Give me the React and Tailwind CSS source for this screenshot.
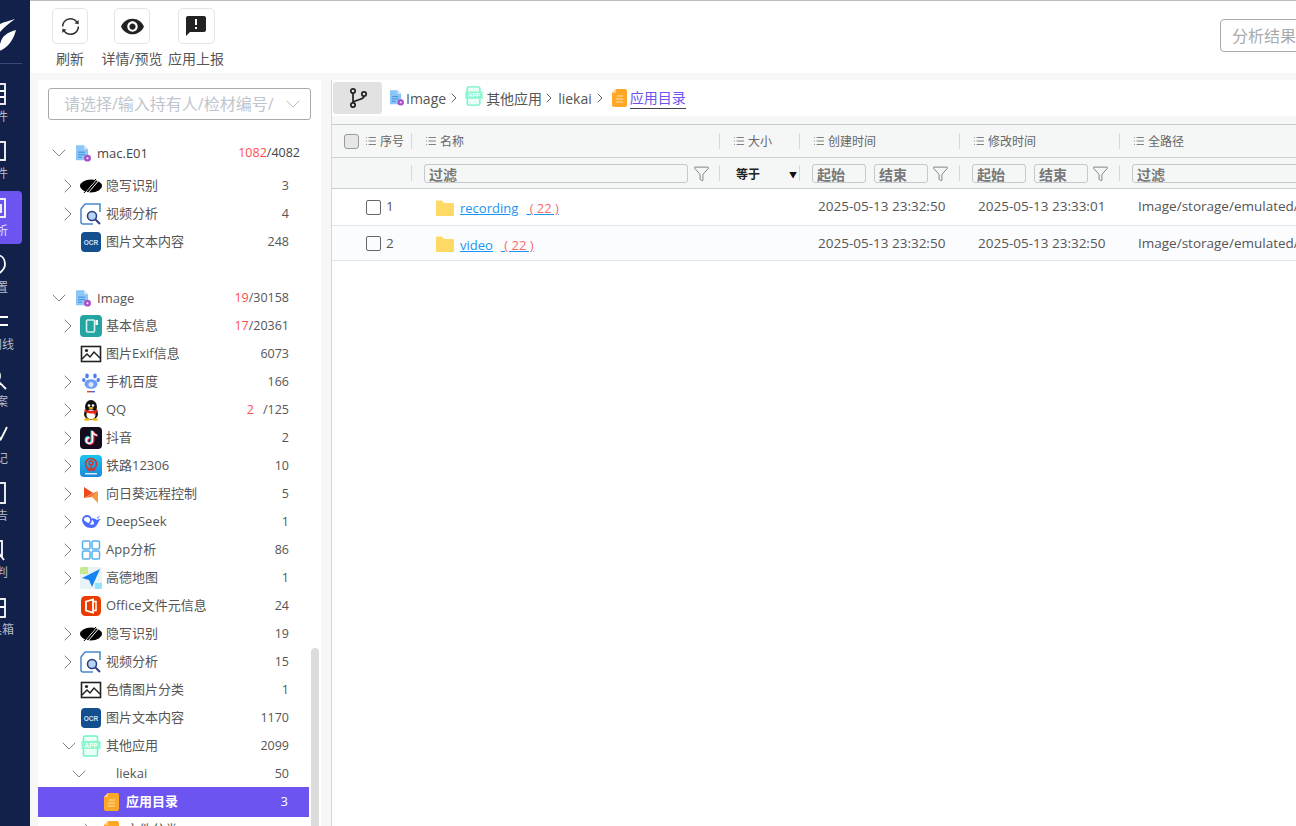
import { ChevronRight, ChevronDown, Filter, List } from "lucide-react"
import { AiOutlineSync } from "react-icons/ai"
import { MdVisibility, MdAnnouncement } from "react-icons/md"

const FileQ = ({ size = 16 }) => (
  <svg width={size} height={size * 1.15} viewBox="0 0 16 18">
    <path d="M1 1h8l4 4v11H1z" fill="#8cc6f7" />
    <path d="M9 1l4 4H9z" fill="#cfe6fb" />
    <path d="M3 8h7M3 10.5h7M3 13h4" stroke="#3f8fdc" strokeWidth="1" />
    <circle cx="12.5" cy="14" r="3.4" fill="#a94fc9" />
    <circle cx="12.5" cy="14" r="1" fill="#fff" />
  </svg>
)

const EyeSlash = () => (
  <svg width="22" height="22" viewBox="0 0 22 22">
    <ellipse cx="11" cy="11" rx="11" ry="6.5" fill="#000" />
    <path d="M5 18L17 4M8 18L20 4" stroke="#fff" strokeWidth="1" />
    <path d="M4 18L16 4" stroke="#000" strokeWidth="1" />
  </svg>
)

const VideoDoc = () => (
  <svg width="22" height="22" viewBox="0 0 22 22">
    <path d="M5 1h10l5 0v8M5 1L1 6v13a2 2 0 0 0 2 2h10" fill="none" stroke="#4a86c8" strokeWidth="1.5" />
    <circle cx="12" cy="13" r="4.5" fill="#b5d5f0" stroke="#2d3f80" strokeWidth="1.6" />
    <path d="M15.5 16.5L20 21" stroke="#2d3f80" strokeWidth="2" />
  </svg>
)

const Ocr = () => (
  <svg width="22" height="22" viewBox="0 0 22 22">
    <rect x="1" y="1" width="20" height="20" rx="4" fill="#134e8e" />
    <text x="11" y="13.5" textAnchor="middle" fontSize="6.5" fontWeight="700" fill="#cfe0f2" fontFamily="Liberation Sans, sans-serif">OCR</text>
  </svg>
)

const BaseInfo = () => (
  <svg width="22" height="22" viewBox="0 0 22 22">
    <rect width="22" height="22" rx="4" fill="#25a5a1" />
    <rect x="6.5" y="5" width="8" height="12" rx="1" fill="none" stroke="#d8f2f1" strokeWidth="1.6" />
    <rect x="15.5" y="5" width="2.5" height="5" fill="#fff" />
  </svg>
)

const Picture = () => (
  <svg width="22" height="22" viewBox="0 0 22 22">
    <rect x="1.5" y="3.5" width="19" height="15" fill="#fff" stroke="#222" strokeWidth="1.6" />
    <circle cx="6.5" cy="7.5" r="1.6" fill="#222" />
    <path d="M2 16l5-5 3 3 4-5 6 6" fill="none" stroke="#222" strokeWidth="1.5" />
  </svg>
)

const Baidu = () => (
  <svg width="22" height="22" viewBox="0 0 22 22">
    <ellipse cx="7" cy="5" rx="1.8" ry="2.4" fill="#4c7ef0" />
    <ellipse cx="15" cy="5" rx="1.8" ry="2.4" fill="#4c7ef0" />
    <ellipse cx="3.8" cy="9" rx="1.7" ry="2.1" fill="#4c7ef0" />
    <ellipse cx="18.2" cy="9" rx="1.7" ry="2.1" fill="#4c7ef0" />
    <ellipse cx="11" cy="13" rx="6.5" ry="4.8" fill="#6f9cf5" />
    <circle cx="11" cy="13.5" r="2.5" fill="#dbe6fd" />
    <rect x="7" y="20" width="4" height="1.4" fill="#e2403d" />
    <rect x="11" y="20" width="4" height="1.4" fill="#3a6fe8" />
  </svg>
)

const Qq = () => (
  <svg width="22" height="22" viewBox="0 0 22 22">
    <ellipse cx="11" cy="8" rx="6" ry="7" fill="#111" />
    <ellipse cx="11" cy="15" rx="7" ry="6" fill="#111" />
    <ellipse cx="11" cy="15.5" rx="4.6" ry="5" fill="#fff" />
    <path d="M4.5 10.5q6.5 2.5 13 0l.5 2q-1 1-2.5 1.3l.3 3-2.5-2.5q-5 .7-8.8-1.8z" fill="#e2231a" />
    <circle cx="9" cy="6.5" r="1.3" fill="#fff" />
    <circle cx="13" cy="6.5" r="1.3" fill="#fff" />
    <ellipse cx="11" cy="9" rx="2.5" ry="1" fill="#f7b500" />
    <ellipse cx="7" cy="20.5" rx="3" ry="1.3" fill="#f7b500" />
    <ellipse cx="15" cy="20.5" rx="3" ry="1.3" fill="#f7b500" />
  </svg>
)

const Douyin = () => (
  <svg width="22" height="22" viewBox="0 0 22 22">
    <rect width="22" height="22" rx="4" fill="#160b1c" />
    <path d="M12.5 4v9.5a3 3 0 1 1-3-3M12.5 4c.4 2.5 2 4 4.5 4.2" fill="none" stroke="#25f4ee" strokeWidth="2.2" transform="translate(-.8 -.4)" />
    <path d="M12.5 4v9.5a3 3 0 1 1-3-3M12.5 4c.4 2.5 2 4 4.5 4.2" fill="none" stroke="#fe2c55" strokeWidth="2.2" transform="translate(.8 .4)" />
    <path d="M12.5 4v9.5a3 3 0 1 1-3-3M12.5 4c.4 2.5 2 4 4.5 4.2" fill="none" stroke="#fff" strokeWidth="1.4" />
  </svg>
)

const Rail = () => (
  <svg width="22" height="22" viewBox="0 0 22 22">
    <defs>
      <linearGradient id="railBg" x1="0" y1="0" x2="0" y2="1">
        <stop offset="0" stopColor="#17c6f2" />
        <stop offset="1" stopColor="#1b86d8" />
      </linearGradient>
    </defs>
    <rect width="22" height="22" rx="4" fill="url(#railBg)" />
    <circle cx="11" cy="9" r="5.5" fill="none" stroke="#d8322b" strokeWidth="1.6" />
    <circle cx="11" cy="8" r="2" fill="none" stroke="#d8322b" strokeWidth="1.3" />
    <path d="M11 10v5M7 15h8" stroke="#d8322b" strokeWidth="1.4" />
    <rect x="5" y="18" width="12" height="1.5" fill="#cfeaf9" />
  </svg>
)

const Sunflower = () => (
  <svg width="22" height="22" viewBox="0 0 22 22">
    <path d="M4 4l9 6-9 5z" fill="#ee4a1c" />
    <path d="M18 8v12l-6-6z" fill="#f79a3a" />
    <path d="M4 15l9-5 5-2-6 6z" fill="#f4763a" />
  </svg>
)

const DeepSeek = () => (
  <svg width="22" height="22" viewBox="0 0 22 22">
    <path d="M2 8q1 9 9 9 5 0 7-5 1-3 3-4-3 0-4 1-3-3-7-1 4 1 4 5-3 2-6-1-3-2-6-4z" fill="#4d6bfe" />
    <path d="M15 4l2 3 3-3-2 4z" fill="#4d6bfe" />
    <circle cx="7" cy="9" r="4" fill="none" stroke="#4d6bfe" strokeWidth="1.8" />
  </svg>
)

const AppGrid = () => (
  <svg width="22" height="22" viewBox="0 0 22 22" fill="none" stroke="#52b0ee" strokeWidth="1.5">
    <rect x="2.5" y="2" width="7.5" height="8" rx="1.5" />
    <rect x="12" y="2" width="7.5" height="8" rx="1.5" />
    <rect x="2.5" y="12" width="7.5" height="8" rx="1.5" />
    <rect x="12" y="12" width="7.5" height="8" rx="1.5" />
  </svg>
)

const Amap = () => (
  <svg width="22" height="22" viewBox="0 0 22 22">
    <rect width="22" height="22" rx="2" fill="#e9f3f5" />
    <path d="M0 2a2 2 0 0 1 2-2h6v7H0z" fill="#c4ec8f" />
    <path d="M15 16h7v4a2 2 0 0 1-2 2h-5z" fill="#8fe3fb" />
    <path d="M20 2L2 11l7 2 3 7z" fill="#1283f0" />
  </svg>
)

const Office = () => (
  <svg width="22" height="22" viewBox="0 0 22 22">
    <rect x="1" y="1" width="20" height="20" rx="4.5" fill="#eb3c00" />
    <path d="M6 6.5L13 4.5v13l-7-2z" fill="none" stroke="#fff" strokeWidth="1.8" />
    <path d="M13 6.5h3v9h-3" fill="none" stroke="#fff" strokeWidth="1.5" />
  </svg>
)

const AppGreen = ({ size = 22 }) => (
  <svg width={size} height={size} viewBox="0 0 22 22">
    <rect x="3.5" y="1" width="14" height="20" rx="1.5" fill="#eafff6" stroke="#6ff5c4" strokeWidth="1.5" />
    <rect x="1.5" y="6" width="19" height="8" fill="#8af7cf" />
    <text x="11" y="12.5" textAnchor="middle" fontSize="6.5" fontWeight="700" fill="#fff" fontFamily="Liberation Sans, sans-serif">APP</text>
  </svg>
)

const OrangeDoc = () => (
  <svg width="15" height="18" viewBox="0 0 15 18">
    <path d="M4 0h9a2 2 0 0 1 2 2v14a2 2 0 0 1-2 2H2a2 2 0 0 1-2-2V4z" fill="#ffa726" />
    <path d="M0 4l4-4v4z" fill="#ffd08a" />
    <path d="M5 7h6M4 10h7M4 13h7" stroke="#ffe2b0" strokeWidth="1" />
  </svg>
)

const Folder = () => (
  <svg width="18" height="16" viewBox="0 0 18 16">
    <path d="M0 1.5A1 1 0 0 1 1 .5h5l2 2.5h9a1 1 0 0 1 1 1V15a1 1 0 0 1-1 1H1a1 1 0 0 1-1-1z" fill="#ffd966" />
  </svg>
)

const Branch = () => (
  <svg width="20" height="22" viewBox="0 0 20 22" fill="none" stroke="#222" strokeWidth="1.7">
    <circle cx="5" cy="4" r="2.2" />
    <circle cx="5" cy="18" r="2.2" />
    <circle cx="16" cy="7" r="2.2" />
    <path d="M5 6.2v9.6M16 9.2c0 3.500-7 3-11 6" />
  </svg>
)

const navItems = [
  { label: "案件", icon: <><rect x="3" y="2" width="18" height="20" /><path d="M3 9h18M3 15h18M14 2v20" /></> },
  { label: "文件", icon: <rect x="3" y="3" width="18" height="18" /> },
  { label: "分析", active: true, icon: <><rect x="3" y="3" width="18" height="18" /><rect x="9" y="9" width="8" height="7" /></> },
  { label: "配置", icon: <path d="M12 2c6 0 9 4 9 9 0 6-5 9-9 11-4-2-9-5-9-11 0-5 3-9 9-9z" /> },
  { label: "时间线", icon: <path d="M2 7h22M8 15h16" /> },
  { label: "查案", icon: <><circle cx="9" cy="9" r="7" /><path d="M14 14l8 8" /></> },
  { label: "笔记", icon: <path d="M3 20l11-8 3 3 6-12M9 22l8-7" /> },
  { label: "报告", icon: <><rect x="2" y="2" width="19" height="20" /><path d="M8 8h8" /></> },
  { label: "研判", icon: <><rect x="3" y="3" width="15" height="15" /><path d="M6 6h9M14 14l6 8" /></> },
  { label: "工具箱", icon: <><rect x="2" y="4" width="19" height="18" /><path d="M2 12h19M12 1v6" /></> },
]

const group1 = [
  { arrow: true, icon: <EyeSlash />, label: "隐写识别", count: "3" },
  { arrow: true, icon: <VideoDoc />, label: "视频分析", count: "4" },
  { icon: <Ocr />, label: "图片文本内容", count: "248" },
]

const group2 = [
  { arrow: true, icon: <BaseInfo />, label: "基本信息", red: "17", count: "/20361" },
  { icon: <Picture />, label: "图片Exif信息", count: "6073" },
  { arrow: true, icon: <Baidu />, label: "手机百度", count: "166" },
  { arrow: true, icon: <Qq />, label: "QQ", red: "2", gap: true, count: "/125" },
  { arrow: true, icon: <Douyin />, label: "抖音", count: "2" },
  { arrow: true, icon: <Rail />, label: "铁路12306", count: "10" },
  { arrow: true, icon: <Sunflower />, label: "向日葵远程控制", count: "5" },
  { arrow: true, icon: <DeepSeek />, label: "DeepSeek", count: "1" },
  { arrow: true, icon: <AppGrid />, label: "App分析", count: "86" },
  { arrow: true, icon: <Amap />, label: "高德地图", count: "1" },
  { icon: <Office />, label: "Office文件元信息", count: "24" },
  { arrow: true, icon: <EyeSlash />, label: "隐写识别", count: "19" },
  { arrow: true, icon: <VideoDoc />, label: "视频分析", count: "15" },
  { icon: <Picture />, label: "色情图片分类", count: "1" },
  { icon: <Ocr />, label: "图片文本内容", count: "1170" },
]

function TreeRow({ arrow, open, icon, label, red, gap, count }) {
  return (
    <div className="flex items-center h-[28px] pl-[27px] pr-[32px] text-[13px] text-[#555]">
      <span className="w-[15px] shrink-0 flex items-center">
        {open && <ChevronDown size={24} strokeWidth={0.8} className="text-[#666] shrink-0 -ml-[8px]" />}
        {arrow && !open && <ChevronRight size={24} strokeWidth={0.8} className="text-[#666] shrink-0 -ml-[9px]" />}
      </span>
      <span className="w-[22px] h-[22px] shrink-0 flex items-center justify-center">{icon}</span>
      <span className="ml-[4px] whitespace-nowrap">{label}</span>
      <span className="ml-auto whitespace-nowrap text-[12.5px]">
        {red && <span className={`text-[#ff4d4f] ${gap ? "mr-[9px]" : ""}`}>{red}</span>}
        {count}
      </span>
    </div>
  )
}

const gridCols = "grid grid-cols-[80px_308px_80px_160px_160px_400px]"

function HeadCell({ children }) {
  return (
    <div className="h-[16px] flex items-center gap-[3px] pl-[13px] border-r border-[#d6d9dc] text-[12px] text-[#666]">
      <List size={12} strokeWidth={1.5} className="text-[#555]" />
      <span className="pt-[2px]">{children}</span>
    </div>
  )
}

function FilterInput({ text, className }) {
  return (
    <div className={`h-[19px] shrink-0 flex items-center px-[4px] pt-[2px] border border-[#c6c9cc] rounded-[3px] text-[14px] font-semibold text-[#777] ${className}`}>
      {text}
    </div>
  )
}

function FilterIcon({ className }) {
  return <Filter size={17} strokeWidth={1} className={`text-[#555] shrink-0 ${className}`} />
}

function DateFilter() {
  return (
    <div className="h-[16px] flex items-center pl-[12px] border-r border-[#d6d9dc]">
      <FilterInput text="起始" className="w-[54px]" />
      <FilterInput text="结束" className="w-[54px] ml-[8px]" />
      <FilterIcon className="ml-[4px]" />
    </div>
  )
}

function DataRow({ no, name, created, modified, rowClass, textClass, linkClass }) {
  return (
    <div className={`${gridCols} items-center text-[13.5px] text-[#555] border-b border-[#e2e5e8] ${rowClass}`}>
      <div className="flex items-center pl-[34px]">
        <span className="w-[15px] h-[15px] border border-[#666] rounded-[2px]" />
        <span className={`ml-[5px] ${textClass}`}>{no}</span>
      </div>
      <div className="flex items-center pl-[24px] pt-[2px]">
        <Folder />
        <a className={`ml-[6px] underline text-[13px] text-[#1a94f5] cursor-pointer whitespace-nowrap ${linkClass}`}>
          {name}
          <span className="ml-[8px] text-[#f56c6c] decoration-[#1a94f5]"> ( 22 ) </span>
        </a>
      </div>
      <div />
      <div className={`pl-[18px] whitespace-nowrap ${textClass}`}>{created}</div>
      <div className={`pl-[18px] whitespace-nowrap ${textClass}`}>{modified}</div>
      <div className={`pl-[18px] whitespace-nowrap ${textClass}`}>Image/storage/emulated/</div>
    </div>
  )
}

export default function App() {
  return (
    <div className="flex w-screen h-screen overflow-hidden bg-[#f7f7f7] font-['Open_Sans','Noto_Sans_CJK_SC',sans-serif]">
      <aside className="w-[68px] -ml-[38px] shrink-0 bg-[#12214a] flex flex-col items-center">
        <svg width="40" height="36" viewBox="0 0 40 36" className="mt-[18px]">
          <path d="M39 1C31 4 23 4 19 11c-1 3 0 6 2 8 3-7 10-12 18-18z" fill="#fff" />
          <path d="M40 12c-7 2-13 5-15 11-1 4-3 6-6 11 12-2 18-11 21-22z" fill="#fff" />
        </svg>
        <div className="w-[52px] h-px bg-[#3a4a7c] mt-[9px] mb-[13px]" />
        {navItems.map((item) => (
          <div
            key={item.label}
            className={`w-[52px] h-[53px] mb-[4px] shrink-0 rounded-[4px] flex flex-col items-center justify-center ${item.active ? "bg-[#6c54f0]" : ""}`}
          >
            <svg width="24" height="24" viewBox="0 0 24 24" fill="none" stroke="#fff" strokeWidth="1.8">
              {item.icon}
            </svg>
            <span className={`text-[12px] mt-[2px] whitespace-nowrap ${item.active ? "text-[#e8e4ff]" : "text-[#b4bacb]"}`}>{item.label}</span>
          </div>
        ))}
      </aside>

      <div className="flex-1 min-w-0 flex flex-col">
        <header className="h-[72px] mt-px shrink-0 bg-white flex pl-[22px] relative">
          <div className="absolute -top-px left-0 right-0 h-px bg-[#bdbdbd]" />
          <div className="w-[36px] flex flex-col items-center shrink-0 mt-[7px]">
            <span className="w-[36px] h-[36px] shrink-0 flex items-center justify-center border border-[#e4e4e4] rounded-[5px]">
              <AiOutlineSync size={21} className="text-[#333]" />
            </span>
            <span className="text-[14px] text-[#555] mt-[4px] whitespace-nowrap">刷新</span>
          </div>
          <div className="w-[62px] ml-[13px] flex flex-col items-center shrink-0 mt-[7px]">
            <span className="w-[36px] h-[36px] shrink-0 flex items-center justify-center border border-[#e4e4e4] rounded-[5px]">
              <MdVisibility size={25} className="text-[#222]" />
            </span>
            <span className="text-[14px] text-[#555] mt-[4px] whitespace-nowrap">详情/预览</span>
          </div>
          <div className="w-[56px] ml-[5px] flex flex-col items-center shrink-0 mt-[7px]">
            <span className="w-[37px] h-[36px] shrink-0 flex items-center justify-center border border-[#e4e4e4] rounded-[5px]">
              <MdAnnouncement size={24} className="text-[#222]" />
            </span>
            <span className="text-[14px] text-[#555] mt-[4px] whitespace-nowrap">应用上报</span>
          </div>
          <div className="ml-[996px] mt-[18px] w-[120px] h-[33px] shrink-0 flex items-center pl-[11px] border border-[#aaa] rounded-[4px] text-[16px] text-[#aaa]">
            分析结果
          </div>
        </header>

        <div className="flex-1 min-h-0 flex pt-[7px] pl-[8px]">
          <section className="w-[283px] shrink-0 bg-white relative overflow-hidden">
            <div className="ml-[10px] mt-[8px] w-[263px] h-[32px] flex items-center pl-[15px] border border-[#aaa] rounded-[3px] text-[16px] text-[#c0c4cc]">
              <span className="w-[211px] shrink-0 overflow-hidden whitespace-nowrap">请选择/输入持有人/检材编号/</span>
              <ChevronDown size={24} strokeWidth={0.8} className="ml-[6px] shrink-0 text-[#aaa]" />
            </div>
            <div className="mt-[19px]">
              <div className="flex items-center h-[28px] pl-[15px] pr-[21px] text-[13px] text-[#444]">
                <ChevronDown size={24} strokeWidth={0.8} className="text-[#666] shrink-0 -ml-[6px]" />
                <span className="ml-[4px] w-[16px] shrink-0"><FileQ /></span>
                <span className="ml-[6px] pt-[1px]">mac.E01</span>
                <span className="ml-auto pt-[1px] text-[12.5px]"><span className="text-[#ff4d4f]">1082</span>/4082</span>
              </div>
              <div className="h-[5px]" />
              {group1.map((row, i) => <TreeRow key={i} {...row} />)}
              <div className="h-[28px]" />
              <div className="flex items-center h-[28px] pl-[15px] pr-[32px] text-[13px] text-[#555]">
                <ChevronDown size={24} strokeWidth={0.8} className="text-[#666] shrink-0 -ml-[6px]" />
                <span className="ml-[4px] w-[16px] shrink-0"><FileQ /></span>
                <span className="ml-[6px] pt-[1px]">Image</span>
                <span className="ml-auto pt-[1px] text-[12.5px]"><span className="text-[#ff4d4f]">19</span>/30158</span>
              </div>
              {group2.map((row, i) => <TreeRow key={i} {...row} />)}
              <TreeRow arrow open icon={<AppGreen />} label="其他应用" count="2099" />
              <div className="flex items-center h-[28px] pl-[35px] pr-[32px] text-[13px] text-[#555]">
                <ChevronDown size={24} strokeWidth={0.8} className="text-[#666] shrink-0 -ml-[6px]" />
                <span className="ml-[25px]">liekai</span>
                <span className="ml-auto text-[12.5px]">50</span>
              </div>
              <div className="w-[271px] h-[30px] -mt-px flex items-center pl-[66px] pr-[21px] bg-[#6c54f0] text-[13px] font-semibold text-white">
                <OrangeDoc />
                <span className="ml-[7px]">应用目录</span>
                <span className="ml-auto font-normal">3</span>
              </div>
              <div className="flex items-center h-[28px] pl-[47px] pr-[32px] -mt-px text-[13px] text-[#555]">
                <ChevronRight size={24} strokeWidth={0.8} className="text-[#666] shrink-0 -ml-[9px]" />
                <span className="ml-[4px]"><OrangeDoc /></span>
                <span className="ml-[7px]">文件分类</span>
              </div>
            </div>
            <div className="absolute left-[273px] top-[568px] bottom-0 w-[8px] rounded-t-[4px] bg-[#dcdcdc]" />
          </section>

          <main className="flex-1 min-w-0 ml-[10px] border-l border-[#d3d7db] bg-white overflow-hidden">
            <div className="h-[36px] flex items-center bg-white text-[14px] text-[#555] whitespace-nowrap">
              <div className="w-[49px] h-[32px] ml-px shrink-0 flex items-center justify-center rounded-[3px] bg-[#e2e2e2]">
                <Branch />
              </div>
              <span className="ml-[7px]"><FileQ size={15} /></span>
              <span className="ml-[2px]">Image</span>
              <ChevronRight size={16} strokeWidth={1.2} className="-ml-[0px] shrink-0 text-[#333]" />
              <span className="ml-[2px] -mt-[4px]"><AppGreen size={20} /></span>
              <span className="ml-[2px]">其他应用</span>
              <ChevronRight size={16} strokeWidth={1.2} className="-ml-[1px] shrink-0 text-[#333]" />
              <span className="ml-[1px]">liekai</span>
              <ChevronRight size={16} strokeWidth={1.2} className="shrink-0 text-[#333]" />
              <span className="ml-[4px]"><OrangeDoc /></span>
              <span className="ml-[3px] text-[#6c54f0] border-b border-[#444]">应用目录</span>
            </div>
            <div className="h-[8px] bg-[#f7f7f7]" />
            <div className="bg-[#f5f7f6] border-t border-[#c5cbd1]">
              <div className={`${gridCols} h-[33px] items-center border-b border-[#ccd0d4]`}>
                <div className="h-[16px] flex items-center gap-[6px] pl-[12px] border-r border-[#d6d9dc] text-[12px] text-[#666]">
                  <span className="w-[15px] h-[15px] shrink-0 border border-[#999] rounded-[3px] bg-[#e6e6e6]" />
                  <span className="flex items-center gap-[3px] whitespace-nowrap">
                    <List size={12} strokeWidth={1.5} className="text-[#555]" />
                    <span className="pt-[2px]">序号</span>
                  </span>
                </div>
                <HeadCell>名称</HeadCell>
                <HeadCell>大小</HeadCell>
                <HeadCell>创建时间</HeadCell>
                <HeadCell>修改时间</HeadCell>
                <div className="h-[16px] flex items-center gap-[3px] pl-[13px] text-[12px] text-[#666]">
                  <List size={12} strokeWidth={1.5} className="text-[#555]" />
                  <span className="pt-[2px]">全路径</span>
                </div>
              </div>
              <div className={`${gridCols} h-[31px] items-center border-b border-[#c9ced2]`}>
                <div className="h-[16px] border-r border-[#d6d9dc]" />
                <div className="h-[16px] flex items-center pl-[12px] border-r border-[#d6d9dc]">
                  <FilterInput text="过滤" className="w-[264px]" />
                  <FilterIcon className="ml-[5px]" />
                </div>
                <div className="h-[16px] flex items-center pl-[16px] pt-[3px] border-r border-[#d6d9dc] text-[12px] font-semibold text-[#222]">
                  <span>等于</span>
                  <span className="ml-auto mr-[2px] text-[8px] text-[#111]">▼</span>
                </div>
                <DateFilter />
                <DateFilter />
                <div className="h-[16px] flex items-center pl-[12px]">
                  <FilterInput text="过滤" className="w-[264px]" />
                </div>
              </div>
            </div>
            <DataRow no="1" name="recording" created="2025-05-13 23:32:50" modified="2025-05-13 23:33:01" rowClass="h-[37px]" textClass="-mt-[2px]" linkClass="mt-[2px]" />
            <DataRow no="2" name="video" created="2025-05-13 23:32:50" modified="2025-05-13 23:32:50" rowClass="h-[35px] bg-[#fbfcfd]" textClass="mt-0" linkClass="mt-[3px]" />
          </main>
        </div>
      </div>
    </div>
  )
}
